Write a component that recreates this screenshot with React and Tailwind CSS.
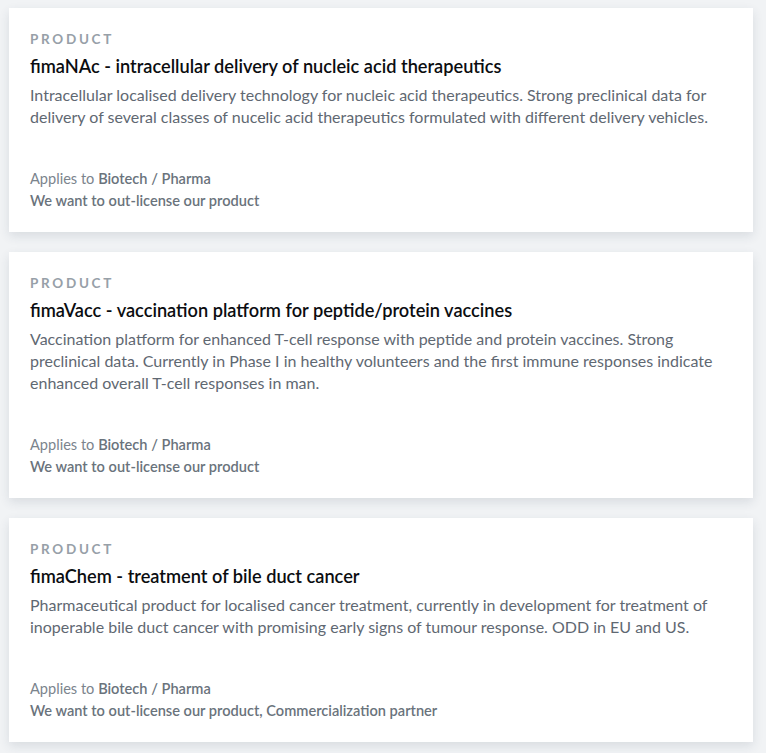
const products = [
  {
    name: 'fimaNAc - intracellular delivery of nucleic acid therapeutics',
    text: 'Intracellular localised delivery technology for nucleic acid therapeutics. Strong preclinical data for delivery of several classes of nucelic acid therapeutics formulated with different delivery vehicles.',
    want: 'We want to out-license our product',
  },
  {
    name: 'fimaVacc - vaccination platform for peptide/protein vaccines',
    text: 'Vaccination platform for enhanced T-cell response with peptide and protein vaccines. Strong preclinical data. Currently in Phase I in healthy volunteers and the first immune responses indicate enhanced overall T-cell responses in man.',
    want: 'We want to out-license our product',
  },
  {
    name: 'fimaChem - treatment of bile duct cancer',
    text: 'Pharmaceutical product for localised cancer treatment, currently in development for treatment of inoperable bile duct cancer with promising early signs of tumour response. ODD in EU and US.',
    want: 'We want to out-license our product, Commercialization partner',
  },
];

const ProductCard = ({ p }) => (
  <div className="bg-white shadow-[0_4px_10px_rgba(40,60,80,0.12)] pl-[21px] pr-6 pt-5 pb-5">
    <p className="text-[13.5px] leading-[22px] font-bold tracking-[0.2em] text-[#97a0a8]">PRODUCT</p>
    <h2 className="text-[18.2px] leading-[32px] font-semibold text-[#0b0d10]">{p.name}</h2>
    <p className="mt-[2px] text-[16px] leading-[22px] text-[#5f6872] mb-10">{p.text}</p>
    <p className="text-[14.6px] leading-[22px] text-[#7b848d]">
      Applies to <span className="font-semibold text-[#6a737c]">Biotech / Pharma</span>
    </p>
    <p className="text-[14.6px] leading-[22px] font-semibold text-[#6a737c]">{p.want}</p>
  </div>
);

export default function App() {
  return (
    <div className="min-h-screen bg-[#f1f3f5] pl-[9px] pr-[13px] pt-2 pb-6" style={{ fontFamily: 'Lato, sans-serif' }}>
      <div className="flex flex-col gap-5">
        {products.map(p => <ProductCard key={p.name} p={p} />)}
      </div>
    </div>
  );
}
